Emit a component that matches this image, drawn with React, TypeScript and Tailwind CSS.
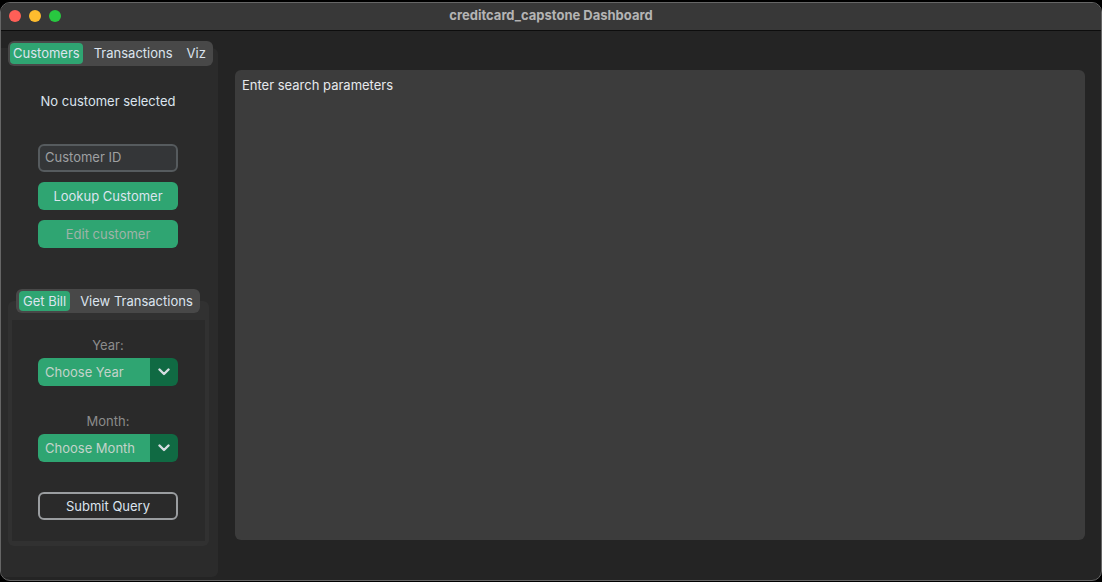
import React from "react";

function Chevron() {
  return (
    <svg width="12" height="8" viewBox="0 0 12 8" className="block">
      <polyline points="1.5,1.5 6,6 10.5,1.5" fill="none" stroke="#d6dde2" strokeWidth="2.4" strokeLinecap="round" strokeLinejoin="round" />
    </svg>
  );
}

function OptionMenu({ label }: { label: string }) {
  return (
    <div className="h-[28px] w-[140px] rounded-[6px] overflow-hidden flex">
      <div className="flex-1 bg-[#2fa572] flex items-center pl-[7px] pt-[2px] text-[13px] text-[#c3d3ca] whitespace-nowrap">{label}</div>
      <div className="w-[28px] bg-[#106a43] flex items-center justify-center">
        <Chevron />
      </div>
    </div>
  );
}

export default function App() {
  return (
    <div className="w-[1102px] h-[582px] bg-black pt-[2px] overflow-hidden" style={{ fontFamily: "Inter, 'Noto Sans', sans-serif" }}>
      <div className="h-[579px] w-[1102px] rounded-[10px] border border-[#666666] overflow-hidden flex flex-col bg-[#242424]">
        {/* title bar */}
        <div className="h-[28px] shrink-0 bg-[#383838] border-b border-[#0d0d0d] relative flex items-center justify-center">
          <div className="absolute left-[8px] top-[7px] flex gap-[8px]">
            <div className="w-[12px] h-[12px] rounded-full bg-[#ff5f57]" />
            <div className="w-[12px] h-[12px] rounded-full bg-[#febc2e]" />
            <div className="w-[12px] h-[12px] rounded-full bg-[#28c840]" />
          </div>
          <div className="text-[13px] font-bold text-[#b4b4b4] -mt-[1px]">creditcard_capstone Dashboard</div>
        </div>

        {/* body */}
        <div className="flex-1 flex min-h-0">
          {/* sidebar */}
          <div className="w-[217px] shrink-0 flex flex-col pt-[10px]">
            <div className="relative z-10 ml-[7px] w-[205px] h-[25px] bg-[#484848] rounded-[6px] p-[2px] flex items-stretch text-[13px] text-[#dce4ee] whitespace-nowrap">
              <div className="bg-[#2fa572] rounded-[4px] px-[3px] pt-[1px] flex items-center">Customers</div>
              <div className="ml-[11px] pt-[1px] flex items-center">Transactions</div>
              <div className="ml-[14px] pt-[1px] flex items-center">Viz</div>
            </div>
            <div className="-mt-[18px] flex-1 bg-[#2b2b2b] rounded-r-[6px] mb-[3px] flex flex-col">
              <div className="ml-[37px] w-[140px] mt-[45px] text-center text-[13px] leading-[16px] text-[#dce4ee]">No customer selected</div>
              <div className="ml-[37px] mt-[35px] w-[140px] h-[28px] rounded-[6px] border-2 border-[#565b5e] bg-[#343638] flex items-center pl-[5px] text-[13px] text-[#9ea0a2]">Customer ID</div>
              <div className="ml-[37px] mt-[10px] w-[140px] h-[28px] rounded-[6px] bg-[#2fa572] flex items-center justify-center pt-[1px] text-[13px] text-[#dce4ee]">Lookup Customer</div>
              <div className="ml-[37px] mt-[10px] w-[140px] h-[28px] rounded-[6px] bg-[#2fa572] flex items-center justify-center pt-[1px] text-[13px] text-[#9fb3a8]">Edit customer</div>

              {/* inner tabview */}
              <div className="ml-[7px] mt-[41px] w-[201px] flex flex-col">
                <div className="relative z-10 ml-[8px] w-[184px] h-[24px] bg-[#484848] rounded-[6px] py-[2px] pl-[3px] flex items-stretch text-[13px] text-[#dce4ee] whitespace-nowrap">
                  <div className="shrink-0 bg-[#2fa572] rounded-[4px] px-[4px] pt-[2px] flex items-center">Get Bill</div>
                  <div className="shrink-0 ml-[10px] pt-[2px] flex items-center">View Transactions</div>
                </div>
                <div className="-mt-[12px] h-[245px] bg-[#313131] rounded-[6px] pt-[19px] px-[4px] pb-[5px]">
                  <div className="h-[221px] bg-[#2a2a2a] flex flex-col pl-[26px]">
                    <div className="mt-[17px] w-[140px] text-center text-[13px] leading-[16px] text-[#8c8c8c]">Year:</div>
                    <div className="mt-[5px]"><OptionMenu label="Choose Year" /></div>
                    <div className="mt-[27px] w-[140px] text-center text-[13px] leading-[16px] text-[#8c8c8c]">Month:</div>
                    <div className="mt-[5px]"><OptionMenu label="Choose Month" /></div>
                    <div className="mt-[30px] w-[140px] h-[28px] rounded-[6px] border-2 border-[#9a9da0] flex items-center justify-center pt-[1px] text-[13px] text-[#dce4ee]">Submit Query</div>
                  </div>
                </div>
              </div>
            </div>
          </div>

          {/* main */}
          <div className="flex-1 pl-[17px] pr-[16px] pt-[39px]">
            <div className="h-[470px] bg-[#3c3c3c] rounded-[6px] pl-[7px] pt-[7px]">
              <div className="text-[13px] leading-[16px] text-[#e6e9ec]">Enter search parameters</div>
            </div>
          </div>
        </div>
      </div>
    </div>
  );
}
